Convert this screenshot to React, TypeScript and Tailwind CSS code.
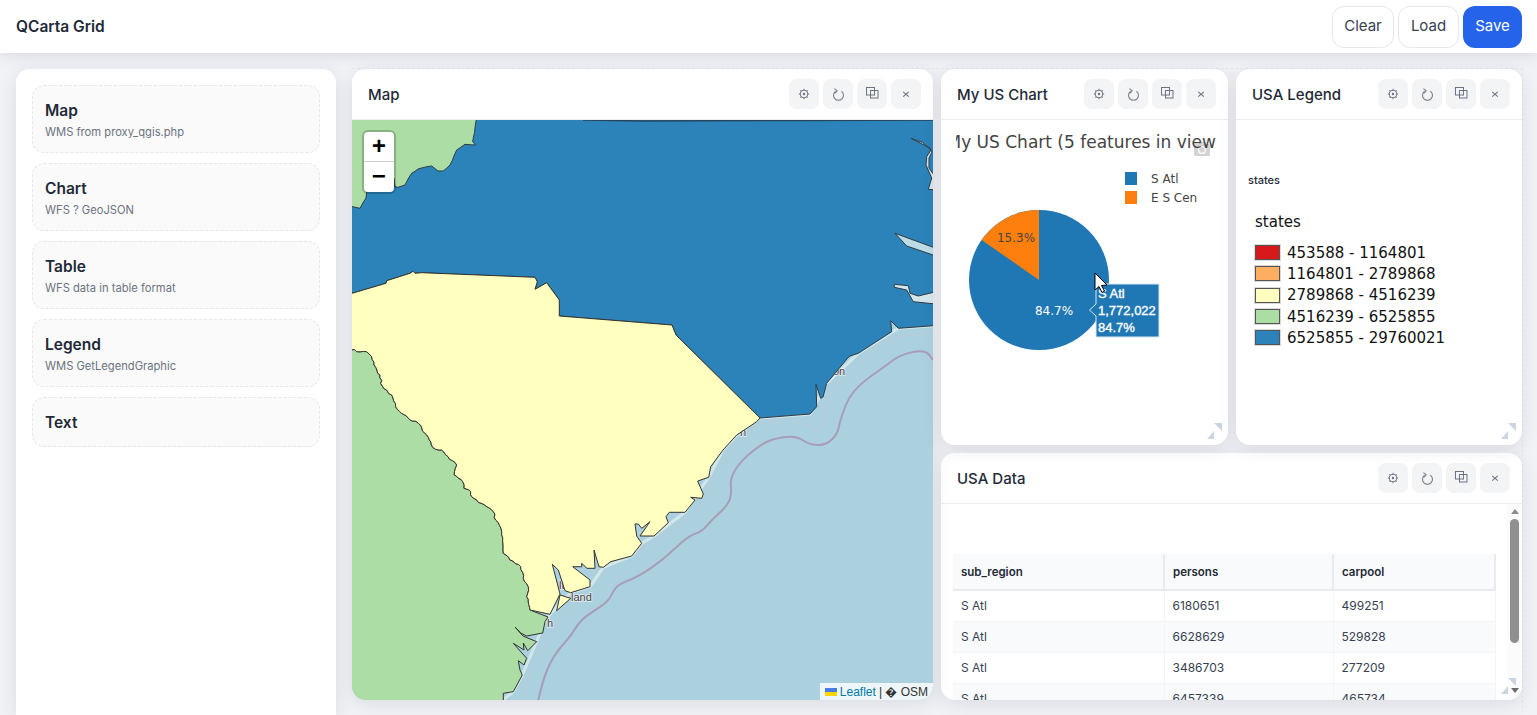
import React from "react";

const Gear = () => (
  <svg width="12" height="12" viewBox="0 0 12 12" fill="none" stroke="#6b7280">
    <circle cx="6" cy="6" r="3.9" strokeWidth="1" />
    <circle cx="6" cy="6" r="1.2" fill="#6b7280" stroke="none" />
    <path d="M6 .8v1.4M6 9.8v1.4M.8 6h1.4M9.8 6h1.4M2.3 2.3l1 1M8.7 8.7l1 1M2.3 9.7l1-1M8.7 3.3l1-1" strokeWidth="0.9" />
  </svg>
);
const Reload = () => (
  <svg width="13" height="15" viewBox="0 0 13 15" fill="none" stroke="#7b828e" strokeWidth="1.1">
    <path d="M3.6 4.2A5 5 0 1 0 9.4 4.2" />
    <path d="M2.4 1.6 L5.2 3.9 L2.6 6.6" />
  </svg>
);
const Copy = () => (
  <svg className="-mt-[2px]" width="13" height="12" viewBox="0 0 13 12" fill="none" stroke="#6b7280" strokeWidth="1">
    <rect x="0.5" y="0.5" width="8" height="7.5" />
    <rect x="4.5" y="3.5" width="7.5" height="7.5" />
  </svg>
);
const Cross = () => (
  <svg width="8" height="8" viewBox="0 0 8 8" fill="none" stroke="#6b7280" strokeWidth="1.1">
    <path d="M1.2 1.8 6.8 6.6M6.8 1.8 1.2 6.6" />
  </svg>
);

const Tool = ({ children }: { children: React.ReactNode }) => (
  <div className="flex h-[30px] w-[30px] items-center justify-center rounded-lg bg-[#f3f4f6]">{children}</div>
);

const Handle = () => (
  <svg className="absolute bottom-[6px] right-[6px]" width="15" height="16" viewBox="0 0 15 16" fill="#cbd5e1">
    <path d="M7 0h8v8zM0 16l7-8v8z" />
  </svg>
);

function Widget({ title, className, children }: { title: string; className: string; children: React.ReactNode }) {
  return (
    <section className={`relative flex min-h-0 flex-col overflow-hidden rounded-[14px] bg-white shadow-[0_4px_18px_rgba(30,41,59,0.1)] ${className}`}>
      <header className="flex h-[51px] shrink-0 items-center justify-between border-b border-[#eceef1] pl-4 pr-3">
        <h2 className="mt-[2px] text-[15px] font-medium text-[#1f2937]">{title}</h2>
        <div className="flex gap-1">
          <Tool><Gear /></Tool>
          <Tool><Reload /></Tool>
          <Tool><Copy /></Tool>
          <Tool><Cross /></Tool>
        </div>
      </header>
      {children}
    </section>
  );
}

const palette = [
  ["Map", "WMS from proxy_qgis.php"],
  ["Chart", "WFS ? GeoJSON"],
  ["Table", "WFS data in table format"],
  ["Legend", "WMS GetLegendGraphic"],
  ["Text", ""],
];

const legend = [
  ["#d7191c", "453588 - 1164801"],
  ["#fdae61", "1164801 - 2789868"],
  ["#ffffbf", "2789868 - 4516239"],
  ["#abdda4", "4516239 - 6525855"],
  ["#2b83ba", "6525855 - 29760021"],
];

const rows = [
  ["S Atl", "6180651", "499251"],
  ["S Atl", "6628629", "529828"],
  ["S Atl", "3486703", "277209"],
  ["S Atl", "6457339", "465734"],
];

type P = [number, number];
const parse = (s: string): P[] =>
  s
    .trim()
    .split(/\s+/)
    .map((p) => p.split(",").map(Number) as P);
const join = (ps: P[]) => ps.map((p) => p.join(",")).join(" ");

// subdivide a coast into short jittered steps, as a digitised border looks
function rough(ps: P[], amp = 1.1, step = 3): P[] {
  const out: P[] = [];
  let k = 1;
  for (let i = 0; i < ps.length - 1; i++) {
    const [x0, y0] = ps[i];
    const [x1, y1] = ps[i + 1];
    const len = Math.hypot(x1 - x0, y1 - y0);
    const n = Math.max(1, Math.round(len / step));
    out.push(ps[i]);
    for (let j = 1; j < n; j++) {
      const t = j / n;
      const w = Math.sin(k++ * 12.9898) * 43758.5453;
      const r = (w - Math.floor(w) - 0.5) * 2 * amp;
      out.push([x0 + (x1 - x0) * t - ((y1 - y0) / len) * r, y0 + (y1 - y0) * t + ((x1 - x0) / len) * r]);
    }
  }
  out.push(ps[ps.length - 1]);
  return out;
}

function smooth(ps: P[]): string {
  let d = `M${ps[0][0]} ${ps[0][1]}`;
  for (let i = 1; i < ps.length - 1; i++) {
    const mx = (ps[i][0] + ps[i + 1][0]) / 2;
    const my = (ps[i][1] + ps[i + 1][1]) / 2;
    d += ` Q${ps[i][0]} ${ps[i][1]} ${mx} ${my}`;
  }
  const l = ps[ps.length - 1];
  return `${d} L${l[0]} ${l[1]}`;
}

const BORDER = rough(
  parse(
    "349,347.8 356.7,351.7 366.7,351.7 371.7,356.7 374,365 380,375 382.3,386 391.7,395 397.3,409.3 410,420 418.3,423.3 426.7,435 432.7,447.3 441.7,450 456.7,465 454.3,475 462.7,481.7 464,488.3 470.7,491.7 471.7,496.7 493.3,511.7 495.7,520 501.7,531.7 503.3,553.3 510,560 520.7,566.7 523.3,578.3 528.3,586.7 526.7,596.7 530,610"
  )
);
const NORTH = rough(
  parse(
    "477,117 475,128 472.7,141.7 475.7,145 465,144.3 456.7,150 450,165 443.3,171 438,171 431.7,166 418,169 411.7,173.3 405,185 398,187.3 395,186.7 394,178 380,185 366.7,191.7 366,198 360,208.3 349,206"
  ),
  0.35,
  5
);

const GREEN_TOP = `349,117 ${join(NORTH)}`;
const BLUE = `${join(NORTH)} 349,293.9 352,293.3 386,283.3 386.7,280.7 410,273.3 413,271.3 415,273.3 421.7,272.7 535,277.3 537.3,281.7 535,289.3 546.7,282.7 559.3,300 559.3,316 672,325 676,335 760,418 810,414 816.7,406.7 816,384.3 820.7,398.3 823,397 826.7,383.3 848.3,357.3 850,356 858.3,353.3 891.7,331.7 890.7,320.7 898.3,328.3 936,325.5 936,117`;
const YELLOW = `349,293.9 352,293.3 386,283.3 386.7,280.7 410,273.3 413,271.3 415,273.3 421.7,272.7 535,277.3 537.3,281.7 535,289.3 546.7,282.7 559.3,300 559.3,316 672,325 676,335 760,418 756.7,421.7 736.7,435 723,450 710.7,466.7 708.7,477.3 697.7,481 703.3,494 701.7,498.3 690.7,497.3 695,500 685,512.3 669.3,512.3 666,516.7 668.3,522.7 654,536 640,536 650,521.7 641.7,528.3 638.3,524 635,524 636.7,536 641.7,543.3 631.7,556 610.7,561.7 603.3,567.3 599,566.7 594,550 595,568.3 587,568.3 581.7,563.3 581.7,566.7 572.7,566.7 590,580 590,586.7 570.7,592.7 565,590.7 558.3,570 552.3,564.3 560,594 550,614.3 ${join([...BORDER].reverse())}`;
const GREEN_LOW = `${join(BORDER)} 548,617 545,621.7 542.7,633 526.7,636 520.7,633 515,627 523,636 536.7,641.7 527.7,650.7 523.3,643 524,650 513.3,643.3 526.7,658.3 524,665 518.3,660.7 520,670 522.3,675 513.3,691.7 503.3,693.3 503.3,703 349,703`;

const PURPLE = smooth(
  parse(
    "538.3,700 543,680 550,663 558,650 571.7,635 580,620.7 595,610 608,601.7 615,588 621.7,583 638,576.7 663,560 688,536 701.7,531.7 711.7,520 728,505 731.7,493 730,478 741.7,460 763,443 776.7,438 796.7,436 810,445 826.7,445 838,433 840,420 851.7,390 886.7,365 900,355 925,349.3 933,360"
  )
);
const THIN = smooth(
  parse(
    "523,700 526.7,680 536.7,660 561.7,618 580,601.7 603,570 613,563 643,548 656.7,540 691.7,516.7 708,496.7 714,472 735,442 763,420.7 770,423 800,418 811.7,430 821.7,430 828,400 838,383 880,343 900,336 933,332.7"
  )
);

const mapLabel =
  "fill-[#444] text-[11px] [font-family:'Liberation_Sans',sans-serif] stroke-[#e6eff2] stroke-[1.5px] [paint-order:stroke]";

function MapDrawing() {
  return (
    <svg className="block h-full w-full" viewBox="352 120 581 580" preserveAspectRatio="none">
      <rect x="352" y="120" width="581" height="580" fill="#abd1df" />
      <path d={THIN} fill="none" stroke="#bfc9da" strokeWidth="1" />
      <path d={PURPLE} fill="none" stroke="#a89db7" strokeWidth="2" />
      <polyline
        fill="none"
        stroke="#d3e6e8"
        strokeWidth="3"
        points="503,700 513.3,691.7 522.3,675 545,621.7 550,614.3 570.7,592.7 590,586.7 603.3,567.3 631.7,556 641.7,543.3 654,536 685,512.3 708.7,477.3 723,450 736.7,435 760,418 810,414 826.7,383.3 858.3,353.3 898.3,328.3 933,325.7"
      />
      <text x="571" y="601" className={mapLabel}>land</text>
      <text x="833" y="375" className={mapLabel}>on</text>
      <text x="547" y="627" className={mapLabel}>h</text>
      <text x="740" y="436" className={mapLabel}>h</text>
      <text x="559" y="589" className={mapLabel}>lt</text>
      <polygon points={GREEN_TOP} fill="#abdda4" />
      <polygon points={GREEN_LOW} fill="#abdda4" stroke="#333" strokeWidth="1" strokeLinejoin="round" />
      <polygon points={BLUE} fill="#2b83ba" stroke="#2f3b45" strokeWidth="1" strokeLinejoin="round" />
      <polygon points={YELLOW} fill="#ffffbf" stroke="#333" strokeWidth="1" strokeLinejoin="round" />
      <polygon points="560,595 570.7,598.3 556.7,610.7" fill="#ffffbf" stroke="#333" strokeWidth="1" />
      <polygon
        points="911,138.3 930,148 932,152 929,158 929,168 936,178 936,190 928.3,189.3 931.7,178 926,165 926.7,156.7 931,150 922.7,142.5"
        fill="#cfe4ea"
        stroke="#2f3b45"
        strokeWidth="1"
      />
      <polygon points="895,233.3 936,248.3 936,256 906.7,246" fill="#bcdbe5" stroke="#2f3b45" strokeWidth="1" />
      <polygon
        points="894.3,284.3 908.3,285.7 910,293.3 918.3,296 936,291.7 936,304 913.3,301.7 906.7,290 894.3,287.3"
        fill="#d3e6ea"
        stroke="#2f3b45"
        strokeWidth="1"
      />
      <polyline points="583,120 640,121 800,120.5 933,120" fill="none" stroke="#26445c" strokeWidth="1.5" />
    </svg>
  );
}

const dv = "[font-family:'DejaVu_Sans',sans-serif]";

function ChartDrawing() {
  return (
    <svg className="block h-[325px] w-[260px]" viewBox="956 120 260 325">
      <g fill="#d4d4d4">
        <rect x="1194" y="144" width="16" height="12" rx="1.5" />
        <rect x="1199" y="142" width="6" height="3" />
      </g>
      <circle cx="1202" cy="150" r="3.4" fill="none" stroke="#fff" strokeWidth="1.2" />
      <text x="1084.5" y="148" textAnchor="middle" className={`fill-[#444] text-[17px] ${dv}`}>
        My US Chart (5 features in view)
      </text>
      <rect x="1125" y="172" width="12" height="13" fill="#1f77b4" />
      <rect x="1125" y="191" width="12" height="13" fill="#ff7f0e" />
      <text x="1151" y="183" className={`fill-[#444] text-[12px] ${dv}`}>S Atl</text>
      <text x="1151" y="202" className={`fill-[#444] text-[12px] ${dv}`}>E S Cen</text>
      <circle cx="1039" cy="280" r="70" fill="#1f77b4" />
      <path d="M1039 280 L1039 210 A70 70 0 0 0 981.7 239.9 Z" fill="#ff7f0e" />
      <text x="1054" y="315" textAnchor="middle" className={`fill-white text-[12px] ${dv}`}>84.7%</text>
      <text x="1016" y="242" textAnchor="middle" className={`fill-[#444] text-[12px] ${dv}`}>15.3%</text>
      <path d="M1096 284 H1159 V337 H1096 V316 L1089.5 310 L1096 304 Z" fill="#1f77b4" stroke="#dbe9f3" strokeWidth="1" />
      <g className="fill-white stroke-white stroke-[0.35px] text-[13px] [font-family:'Liberation_Sans',sans-serif]">
        <text x="1098" y="298">S Atl</text>
        <text x="1098" y="315">1,772,022</text>
        <text x="1098" y="332">84.7%</text>
      </g>
      <path d="M1095 273 V290 L1099 286.5 L1102 292.5 L1104.5 291 L1101.5 285.5 L1107 285 Z" fill="#fff" stroke="#000" strokeWidth="1" />
    </svg>
  );
}

export default function App() {
  return (
    <div className="flex h-screen flex-col overflow-hidden bg-[#f1f2f6] [font-family:Inter,sans-serif]">
      <header className="relative z-20 flex h-[53px] shrink-0 items-center justify-between bg-white pl-4 pr-[15px] shadow-[0_2px_14px_rgba(30,41,59,0.12)]">
        <h1 className="text-[15.5px] font-semibold text-[#1f2937]">QCarta Grid</h1>
        <div className="flex gap-1">
          <button className="h-[42px] w-[62px] rounded-xl border border-[#e5e7eb] bg-white text-[15px] text-[#374151]">Clear</button>
          <button className="h-[42px] w-[61px] rounded-xl border border-[#e5e7eb] bg-white text-[15px] text-[#374151]">Load</button>
          <button className="h-[42px] w-[59px] rounded-xl bg-[#2563eb] text-[15px] text-white">Save</button>
        </div>
      </header>

      <main className="flex min-h-0 flex-1 gap-4 pl-4 pt-4">
        <aside className="flex w-[320px] shrink-0 flex-col gap-[10px] rounded-t-[14px] bg-white p-4 shadow-[0_4px_18px_rgba(30,41,59,0.1)]">
          {palette.map(([name, sub]) => (
            <div
              key={name}
              className={`rounded-xl border border-dashed border-[#e5e7eb] bg-[#fafafa] px-3 pt-[14px] ${sub ? "h-[68px]" : "h-[50px]"}`}
            >
              <div className="text-[15.5px] font-semibold leading-[22px] text-[#1f2937]">{name}</div>
              {sub && <div className="mt-px text-[11.2px] leading-[18px] text-[#6b7280]">{sub}</div>}
            </div>
          ))}
        </aside>

        <div className="-mt-px h-[680px] w-[1171px] border-r border-t border-dashed border-[#e6e7ec]">
          <div className="grid h-[631px] w-[1170px] grid-cols-[581px_287px_286px] grid-rows-[376px_247px] gap-2">
            <Widget title="USA Data" className="col-start-2 col-end-4 row-start-2">
              <div className="relative min-h-0 flex-1 overflow-hidden pl-3 pt-[50px]">
                <table className="w-[542px] table-fixed border-collapse text-left text-[12px] text-[#374151]">
                  <colgroup>
                    <col className="w-[211px]" />
                    <col className="w-[169px]" />
                    <col className="w-[162px]" />
                  </colgroup>
                  <thead>
                    <tr className="h-[36px] bg-[#f9fafb] text-[#1f2937]">
                      {["sub_region", "persons", "carpool"].map((h) => (
                        <th key={h} className="border-b-2 border-r-2 border-[#e9eaef] px-2 pt-[2px] text-[11.5px] font-semibold">{h}</th>
                      ))}
                    </tr>
                  </thead>
                  <tbody>
                    {rows.map((r, i) => (
                      <tr key={i} className={`h-[31px] ${i % 2 ? "bg-[#f9fafb]" : "bg-white"}`}>
                        {r.map((c, j) => (
                          <td key={j} className="border-b border-r border-[#f3f4f6] px-2">{c}</td>
                        ))}
                      </tr>
                    ))}
                  </tbody>
                </table>
                <div className="absolute bottom-0 right-0 top-0 flex w-[15px] flex-col items-center bg-[#fbfbfb]">
                  <div className="mt-[5px] h-0 w-0 border-x-[4px] border-b-[5px] border-x-transparent border-b-[#8a8a8a]" />
                  <div className="mt-[5px] h-[124px] w-[9px] rounded-full bg-[#8f8f8f]" />
                  <div className="mb-[7px] mt-auto h-0 w-0 border-x-[4px] border-t-[5px] border-x-transparent border-t-[#6a6a6a]" />
                </div>
              </div>
              <Handle />
            </Widget>

            <Widget title="Map" className="col-start-1 row-start-1 row-end-3">
              <div className="relative min-h-0 flex-1">
                <MapDrawing />
                <div className="absolute left-[12px] top-[12px] w-[30px] overflow-hidden rounded bg-white shadow-[0_0_0_2px_rgba(0,0,0,0.2)] [font-family:'Liberation_Mono',monospace]">
                  <div className="flex h-[30px] items-center justify-center border-b border-[#ccc] pt-[3px] text-[24px] font-bold leading-none text-black">+</div>
                  <div className="flex h-[30px] items-center justify-center pt-px text-[24px] font-bold leading-none text-black">−</div>
                </div>
                <div className="absolute bottom-0 right-0 flex h-[17px] items-center gap-[3px] rounded-br-[14px] bg-white/80 pl-[5px] pr-[5px] text-[12px] text-[#333] [font-family:'Liberation_Sans',sans-serif]">
                  <svg width="12" height="8" viewBox="0 0 12 8">
                    <rect width="12" height="4" fill="#4C7BE1" />
                    <rect y="4" width="12" height="4" fill="#FFD500" />
                  </svg>
                  <span className="text-[#0078a8]">Leaflet</span>
                  <span>| � OSM</span>
                </div>
              </div>
            </Widget>

            <Widget title="My US Chart" className="col-start-2 row-start-1">
              <div className="min-h-0 flex-1 pl-[15px]">
                <ChartDrawing />
              </div>
              <Handle />
            </Widget>

            <Widget title="USA Legend" className="col-start-3 row-start-1">
              <div className="min-h-0 flex-1 pl-3 pt-[53px]">
                <div className="text-[11px] font-medium leading-[14px] text-[#1f2937]">states</div>
                <div className={`ml-[7px] mt-[26px] text-[15px] leading-[18px] text-[#111] ${dv}`}>
                  <div className="mb-[11px]">states</div>
                  <div className="flex flex-col">
                    {legend.map(([color, label]) => (
                      <div key={label} className="flex h-[21.3px] items-center gap-[7px]">
                        <span
                          className="h-[15px] w-[25px] border border-[#555] shadow-[0_0_0_1px_rgba(0,0,0,0.15)]"
                          style={{ backgroundColor: color }}
                        />
                        <span className="whitespace-nowrap">{label}</span>
                      </div>
                    ))}
                  </div>
                </div>
              </div>
              <Handle />
            </Widget>
          </div>
        </div>
      </main>
    </div>
  );
}
